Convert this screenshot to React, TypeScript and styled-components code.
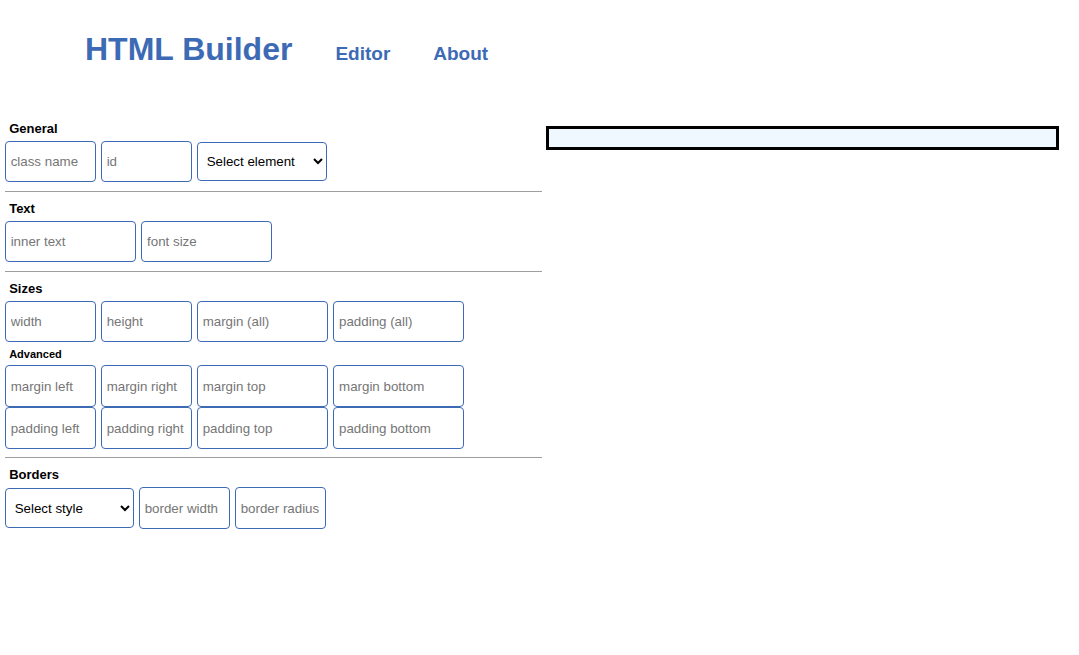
import React from "react";
import styled, { createGlobalStyle } from "styled-components";

const GlobalStyle = createGlobalStyle`
  html, body {
    margin: 0;
    padding: 0;
    background: #ffffff;
    font-family: "Liberation Sans", Arial, sans-serif;
  }
`;

const BLUE = "#3d6ab5";

const Page = styled.div`
  width: 1079px;
  min-height: 655px;
  display: flex;
  flex-direction: column;
`;

const Header = styled.header`
  height: 121px;
  box-sizing: border-box;
  padding: 31px 0 0 85px;
  display: flex;
  align-items: baseline;
  gap: 43px;
`;

const Brand = styled.h1`
  margin: 0;
  font-size: 32px;
  font-weight: bold;
  color: ${BLUE};
  line-height: normal;
`;

const NavLink = styled.a`
  font-size: 19px;
  font-weight: bold;
  color: ${BLUE};
  text-decoration: none;
`;

const Main = styled.main`
  display: flex;
  align-items: flex-start;
  gap: 4.3px;
`;

const Editor = styled.div`
  width: 537px;
  padding-left: 4.67px;
  display: flex;
  flex-direction: column;
`;

const Divider = styled.hr`
  margin: 8.6px 0 0 0;
  border: none;
  height: 1px;
  background: #9e9e9e;
  width: 100%;
`;

const SectionTitle = styled.div<{ $first?: boolean }>`
  margin-top: ${(p) => (p.$first ? "0" : "9px")};
  padding-left: 4.5px;
  font-size: 13px;
  line-height: 15px;
  font-weight: bold;
  color: #000;
`;

const SubTitle = styled.div`
  margin-top: 5.4px;
  padding-left: 4.5px;
  font-size: 11px;
  line-height: 13px;
  font-weight: bold;
  color: #000;
`;

const Row = styled.div<{ $space?: string }>`
  margin-top: ${(p) => p.$space ?? "5px"};
  display: flex;
  align-items: center;
  gap: 5px;
`;

const Field = styled.input<{ $wide?: boolean }>`
  box-sizing: border-box;
  width: ${(p) => (p.$wide ? "131.4px" : "91px")};
  height: 41.4px;
  margin: 0;
  padding: 0 5px;
  border: 1px solid ${BLUE};
  border-radius: 4px;
  font-family: "Liberation Sans", Arial, sans-serif;
  font-size: 13.33px;
  color: #000;
  background: #fff;
  outline: none;

  &::placeholder {
    color: #767676;
  }
`;

const Picker = styled.select<{ $lead?: boolean }>`
  box-sizing: border-box;
  width: ${(p) => (p.$lead ? "129px" : "130px")};
  height: 39.4px;
  margin: 0;
  padding: 0 4px 0 5px;
  border: 1px solid ${BLUE};
  border-radius: 4px;
  font-family: "Liberation Sans", Arial, sans-serif;
  font-size: 13.33px;
  color: #000;
  background: #fff;
`;

const Preview = styled.div`
  box-sizing: border-box;
  margin-top: 5px;
  width: 513px;
  height: 24px;
  border: 3px solid #000;
  background: #eff7ff;
`;

export default function App() {
  return (
    <Page>
      <GlobalStyle />
      <Header>
        <Brand>HTML Builder</Brand>
        <NavLink href="#">Editor</NavLink>
        <NavLink href="#">About</NavLink>
      </Header>
      <Main>
        <Editor>
          <SectionTitle $first>General</SectionTitle>
          <Row>
            <Field placeholder="class name" />
            <Field placeholder="id" />
            <Picker defaultValue="">
              <option value="">Select element</option>
              <option value="div">div</option>
              <option value="p">p</option>
              <option value="span">span</option>
            </Picker>
          </Row>
          <Divider />
          <SectionTitle>Text</SectionTitle>
          <Row>
            <Field $wide placeholder="inner text" />
            <Field $wide placeholder="font size" />
          </Row>
          <Divider />
          <SectionTitle>Sizes</SectionTitle>
          <Row>
            <Field placeholder="width" />
            <Field placeholder="height" />
            <Field $wide placeholder="margin (all)" />
            <Field $wide placeholder="padding (all)" />
          </Row>
          <SubTitle>Advanced</SubTitle>
          <Row $space="4.6px">
            <Field placeholder="margin left" />
            <Field placeholder="margin right" />
            <Field $wide placeholder="margin top" />
            <Field $wide placeholder="margin bottom" />
          </Row>
          <Row $space="0.6px">
            <Field placeholder="padding left" />
            <Field placeholder="padding right" />
            <Field $wide placeholder="padding top" />
            <Field $wide placeholder="padding bottom" />
          </Row>
          <Divider />
          <SectionTitle>Borders</SectionTitle>
          <Row>
            <Picker $lead defaultValue="">
              <option value="">Select style</option>
              <option value="solid">solid</option>
              <option value="dashed">dashed</option>
              <option value="dotted">dotted</option>
            </Picker>
            <Field placeholder="border width" />
            <Field placeholder="border radius" />
          </Row>
        </Editor>
        <Preview />
      </Main>
    </Page>
  );
}
